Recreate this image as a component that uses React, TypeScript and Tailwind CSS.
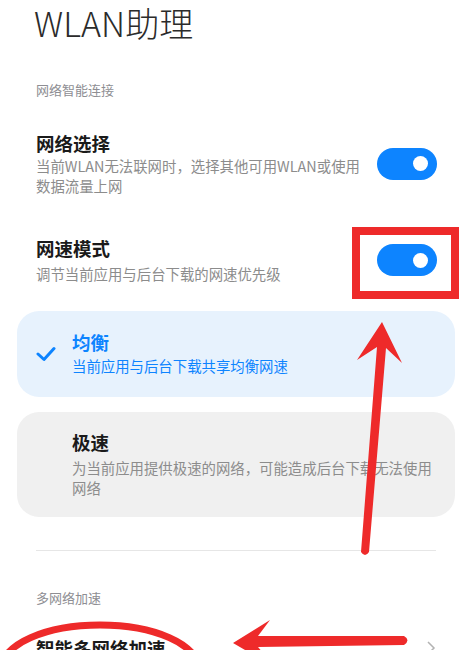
import React from "react";

const font = { fontFamily: '"Noto Sans CJK SC", "Noto Sans", sans-serif' };

function Toggle() {
  return (
    <div className="flex h-[32px] w-[60px] shrink-0 items-center justify-end rounded-full bg-[#0d84ff] pr-[9px]">
      <div className="h-[15px] w-[15px] rounded-full bg-white" />
    </div>
  );
}

function SectionHeader({ children }: { children: React.ReactNode }) {
  return <div className="px-[36px] text-[13px] leading-[20px] text-[#8e8e93]">{children}</div>;
}

function Overlay() {
  return (
    <svg className="pointer-events-none absolute left-0 top-0" width="472" height="650" viewBox="0 0 472 650">
      <rect x="356" y="231" width="99" height="64" fill="none" stroke="#ee2a2a" strokeWidth="8" />
      <path d="M382,322 L402,363 L386,348 L369,552 Q365,558 361,552 L377,347 L357,360 Z" fill="#ee2a2a" />
      <path d="M233,643 L270,620 L258,636 L404,636 Q411,640 404,645 L258,647 L276,668 Z" fill="#ee2a2a" />
      <ellipse cx="100" cy="668" rx="98" ry="43" fill="none" stroke="#ee2a2a" strokeWidth="7" />
    </svg>
  );
}

export default function App() {
  return (
    <div className="relative h-[650px] w-[472px] overflow-hidden bg-white" style={font}>
      <h1 className="px-[34px] pt-[2px] text-[34px] font-light leading-[42px] text-[#2b2b2b]">WLAN助理</h1>

      <div className="mt-[36px]">
        <SectionHeader>网络智能连接</SectionHeader>
      </div>

      <div className="mt-[31px] flex items-center justify-between pl-[36px] pr-[35px]">
        <div className="w-[330px]">
          <div className="text-[18.5px] font-bold leading-[24px] text-[#1a1a1a]">网络选择</div>
          <div className="mt-[1px] text-[14.4px] leading-[20px] text-[#8c8c8c]">
            当前WLAN无法联网时，选择其他可用WLAN或使用
            <br />
            数据流量上网
          </div>
        </div>
        <Toggle />
      </div>

      <div className="mt-[40px] flex items-center justify-between pl-[36px] pr-[35px]">
        <div>
          <div className="text-[18.5px] font-bold leading-[24px] text-[#1a1a1a]">网速模式</div>
          <div className="mt-[4px] text-[14.4px] leading-[20px] text-[#8c8c8c]">调节当前应用与后台下载的网速优先级</div>
        </div>
        <Toggle />
      </div>

      <div className="mx-[17px] mt-[27px] flex flex-col gap-[15px]">
        <div className="flex h-[86px] items-center rounded-[22px] bg-[#e7f2fd]">
          <div className="flex w-[55px] justify-start pl-[19px]">
            <svg width="20" height="16" viewBox="0 0 20 16">
              <polyline points="2,8 8,13.5 18,2.5" fill="none" stroke="#0d84ff" strokeWidth="3" strokeLinecap="round" strokeLinejoin="round" />
            </svg>
          </div>
          <div className="pb-[2px]">
            <div className="text-[18.5px] font-bold leading-[24px] text-[#0d84ff]">均衡</div>
            <div className="mt-[2px] text-[14.4px] leading-[20px] text-[#0d84ff]">当前应用与后台下载共享均衡网速</div>
          </div>
        </div>

        <div className="flex h-[105px] items-center rounded-[22px] bg-[#f0f0f0] pl-[55px] pr-[16px]">
          <div className="pb-[2px]">
            <div className="text-[18.5px] font-bold leading-[24px] text-[#1a1a1a]">极速</div>
            <div className="mt-[4px] text-[14.4px] leading-[20px] text-[#8c8c8c]">
              为当前应用提供极速的网络，可能造成后台下载无法使用
              <br />
              网络
            </div>
          </div>
        </div>
      </div>

      <div className="mx-[36px] mt-[33px] h-px bg-[#e6e6e6]" />

      <div className="mt-[37px]">
        <SectionHeader>多网络加速</SectionHeader>
      </div>

      <div className="mt-[28px] flex items-center justify-between pl-[36px] pr-[36px]">
        <div className="text-[18.5px] font-bold leading-[24px] text-[#1a1a1a]">智能多网络加速</div>
        <svg width="10" height="16" viewBox="0 0 10 16">
          <polyline points="2,2 8,8 2,14" fill="none" stroke="#b3b3b3" strokeWidth="1.5" />
        </svg>
      </div>

      <Overlay />
    </div>
  );
}
